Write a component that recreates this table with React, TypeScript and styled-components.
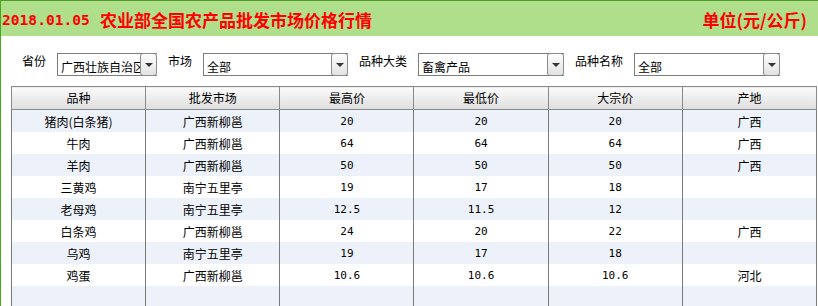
import React from "react";
import styled, { createGlobalStyle } from "styled-components";

const GlobalStyle = createGlobalStyle`
  html, body {
    margin: 0;
    padding: 0;
    background: #fff;
    overflow: hidden;
  }
  body {
    font-family: "Noto Sans CJK SC", "Liberation Sans", sans-serif;
    font-size: 12px;
    color: #000;
  }
`;

const Frame = styled.div`
  width: 818px;
  height: 306px;
  box-sizing: border-box;
  border-left: 1px solid #45a81a;
  overflow: hidden;
`;

const TitleBar = styled.div`
  height: 36px;
  box-sizing: border-box;
  background: #b0df8c;
  border-top: 1px solid #4f9a2a;
  display: flex;
  align-items: center;
  justify-content: space-between;
  padding: 2px 11px 0 1px;
  color: #ff0000;
  font-weight: bold;
  font-size: 17px;
`;

const TitleMain = styled.span`
  display: flex;
  align-items: center;
`;

const TitleDate = styled.span`
  display: inline-block;
  width: 88px;
  margin-right: 10px;
  font-family: "DejaVu Sans Mono", "Liberation Mono", monospace;
  font-size: 14.6px;
  white-space: nowrap;
`;

const FilterRow = styled.div`
  display: flex;
  align-items: flex-start;
  gap: 11px;
  padding: 17px 0 0 21px;
  height: 23px;
`;

const Label = styled.span`
  line-height: 15px;
  white-space: nowrap;
`;

const SelectBox = styled.div<{ $w: number }>`
  width: ${(p) => p.$w}px;
  height: 23px;
  box-sizing: border-box;
  border: 1px solid #7d7d7d;
  border-right: none;
  display: flex;
  background: #fff;
`;

const SelectText = styled.div`
  flex: 1;
  overflow: hidden;
  white-space: nowrap;
  padding: 5px 0 0 3px;
  line-height: 15px;
`;

const DropButton = styled.div`
  width: 17px;
  margin: -1px 0;
  box-sizing: border-box;
  border: 1px solid #8a8a8a;
  border-radius: 3px;
  background: linear-gradient(#fdfdfd, #e2e2e2);
  display: flex;
  align-items: center;
  justify-content: center;
`;

const Arrow = styled.span`
  width: 0;
  height: 0;
  border-left: 4px solid transparent;
  border-right: 4px solid transparent;
  border-top: 4px solid #333;
  margin-top: 1px;
`;

const Table = styled.table`
  margin: 10px 0 0 10px;
  width: 806px;
  border-collapse: collapse;
  table-layout: fixed;
`;

const HeadCell = styled.th`
  height: 22px;
  padding: 0;
  font-weight: normal;
  border: 1px solid #8a8a8a;
  background: linear-gradient(#fbfbfb, #dedede);
  text-align: center;
  line-height: 20px;
`;

const Row = styled.tr<{ $alt: boolean }>`
  background: ${(p) => (p.$alt ? "#ffffff" : "#edf2fa")};
`;

const Cell = styled.td<{ $num?: boolean }>`
  height: 22px;
  padding: 0;
  text-align: center;
  border-left: 1px solid #7a7a7a;
  border-right: 1px solid #7a7a7a;
  font-family: ${(p) =>
    p.$num ? '"DejaVu Sans Mono", monospace' : '"Noto Sans CJK SC", sans-serif'};
  font-size: ${(p) => (p.$num ? "11px" : "12px")};
`;

const filters = [
  { label: "省份", value: "广西壮族自治区", w: 100 },
  { label: "市场", value: "全部", w: 145 },
  { label: "品种大类", value: "畜禽产品", w: 146 },
  { label: "品种名称", value: "全部", w: 146 },
];

const headers = ["品种", "批发市场", "最高价", "最低价", "大宗价", "产地"];

const rows = [
  ["猪肉(白条猪)", "广西新柳邕", "20", "20", "20", "广西"],
  ["牛肉", "广西新柳邕", "64", "64", "64", "广西"],
  ["羊肉", "广西新柳邕", "50", "50", "50", "广西"],
  ["三黄鸡", "南宁五里亭", "19", "17", "18", ""],
  ["老母鸡", "南宁五里亭", "12.5", "11.5", "12", ""],
  ["白条鸡", "广西新柳邕", "24", "20", "22", "广西"],
  ["乌鸡", "南宁五里亭", "19", "17", "18", ""],
  ["鸡蛋", "广西新柳邕", "10.6", "10.6", "10.6", "河北"],
  ["", "", "", "", "", ""],
];

export default function App() {
  return (
    <>
      <GlobalStyle />
      <Frame>
        <TitleBar>
          <TitleMain>
            <TitleDate>2018.01.05</TitleDate>
            <span>农业部全国农产品批发市场价格行情</span>
          </TitleMain>
          <span>单位(元/公斤)</span>
        </TitleBar>

        <FilterRow>
          {filters.map((f) => (
            <React.Fragment key={f.label}>
              <Label>{f.label}</Label>
              <SelectBox $w={f.w}>
                <SelectText>{f.value}</SelectText>
                <DropButton>
                  <Arrow />
                </DropButton>
              </SelectBox>
            </React.Fragment>
          ))}
        </FilterRow>

        <Table>
          <thead>
            <tr>
              {headers.map((h) => (
                <HeadCell key={h}>{h}</HeadCell>
              ))}
            </tr>
          </thead>
          <tbody>
            {rows.map((r, i) => (
              <Row key={i} $alt={i % 2 === 1}>
                {r.map((c, j) => (
                  <Cell key={j} $num={j >= 2 && j <= 4}>
                    {c}
                  </Cell>
                ))}
              </Row>
            ))}
          </tbody>
        </Table>
      </Frame>
    </>
  );
}
